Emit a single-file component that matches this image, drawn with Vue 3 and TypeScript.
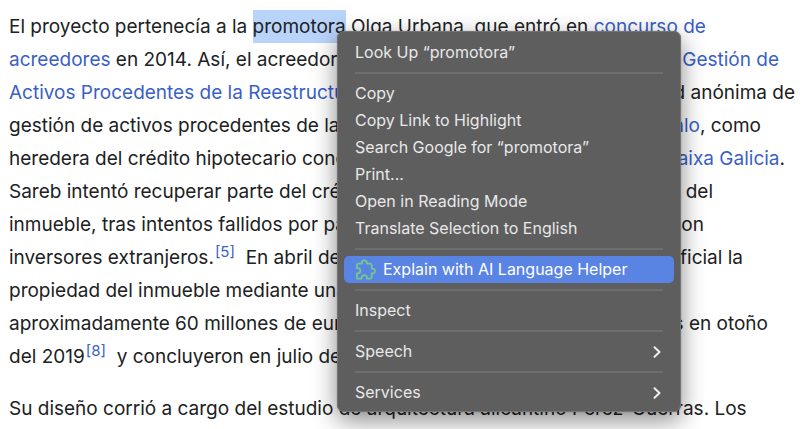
<script setup lang="ts">
interface Segment {
  text: string
  kind?: 'link' | 'mark' | 'note'
}

interface Line {
  start: Segment[]
  end?: Segment[]
  width?: number
}

interface MenuItem {
  label: string
  icon?: boolean
  submenu?: boolean
}

const paragraphs: Line[][] = [
  [
    {
      start: [
        { text: 'El proyecto pertenecía a la ' },
        { text: 'promotora', kind: 'mark' },
        { text: ' Olga Urbana, que entró en ' },
        { text: 'concurso de', kind: 'link' },
      ],
    },
    {
      start: [{ text: 'acreedores', kind: 'link' }, { text: ' en 2014. Así, el acreedor' }],
      end: [{ text: 'Gestión de', kind: 'link' }],
      width: 770,
    },
    {
      start: [{ text: 'Activos Procedentes de la Reestructu', kind: 'link' }],
      end: [{ text: 'sociedad anónima de' }],
      width: 786,
    },
    {
      start: [{ text: 'gestión de activos procedentes de la' }],
      end: [{ text: 'Gonzalo', kind: 'link' }, { text: ', como' }],
      width: 752,
    },
    {
      start: [{ text: 'heredera del crédito hipotecario conc' }],
      end: [{ text: 'Caixa Galicia', kind: 'link' }, { text: '.' }],
      width: 776,
    },
    {
      start: [{ text: 'Sareb intentó recuperar parte del cré' }],
      end: [{ text: 'del' }],
      width: 704,
    },
    {
      start: [{ text: 'inmueble, tras intentos fallidos por pa' }],
      end: [{ text: 'con' }],
      width: 695,
    },
    {
      start: [
        { text: 'inversores extranjeros.' },
        { text: '[5]', kind: 'note' },
        { text: '  En abril de' },
      ],
      end: [{ text: 'oficial la' }],
      width: 734,
    },
    { start: [{ text: 'propiedad del inmueble mediante una' }] },
    {
      start: [{ text: 'aproximadamente 60 millones de eur' }],
      end: [{ text: 'obras en otoño' }],
      width: 759,
    },
    {
      start: [
        { text: 'del 2019' },
        { text: '[8]', kind: 'note' },
        { text: '  y concluyeron en julio de' },
      ],
    },
  ],
  [
    {
      start: [
        {
          text: 'Su diseño corrió a cargo del estudio de arquitectura alicantino Pérez-Guerras. Los',
        },
      ],
    },
  ],
]

const groups: MenuItem[][] = [
  [{ label: 'Look Up “promotora”' }],
  [
    { label: 'Copy' },
    { label: 'Copy Link to Highlight' },
    { label: 'Search Google for “promotora”' },
    { label: 'Print...' },
    { label: 'Open in Reading Mode' },
    { label: 'Translate Selection to English' },
  ],
  [{ label: 'Explain with AI Language Helper', icon: true }],
  [{ label: 'Inspect' }],
  [{ label: 'Speech', submenu: true }],
  [{ label: 'Services', submenu: true }],
]
</script>

<template>
  <main class="page">
    <article class="article">
      <p v-for="(lines, p) in paragraphs" :key="p" class="paragraph">
        <span
          v-for="(line, l) in lines"
          :key="l"
          class="line"
          :style="line.width ? { width: line.width + 'px' } : undefined"
        >
          <span v-for="(part, i) in [line.start, line.end ?? []]" :key="i" class="part">
            <template v-for="(seg, s) in part" :key="s">
              <a v-if="seg.kind === 'link'" href="#" class="link">{{ seg.text }}</a>
              <mark v-else-if="seg.kind === 'mark'" class="selected">{{ seg.text }}</mark>
              <sup v-else-if="seg.kind === 'note'" class="note"><a href="#" class="link">{{ seg.text }}</a></sup>
              <span v-else>{{ seg.text }}</span>
            </template>
          </span>
        </span>
      </p>
    </article>

    <div class="menu" role="menu">
      <div v-for="(group, g) in groups" :key="g" class="group" role="group">
        <button
          v-for="item in group"
          :key="item.label"
          type="button"
          role="menuitem"
          class="item"
          :class="{ active: item.icon }"
        >
          <svg v-if="item.icon" class="puzzle" viewBox="0 0 24 24" aria-hidden="true">
            <path
              d="M20 11h-1V7.200c0-1.200-.8-2-2-2h-3.600V4.200C13.400 2.800 12.200 1.600 10.700 1.600S8 2.800 8 4.200v1H4.200c-1.200 0-2 .8-2 2v3.200h.9c1.700 0 3 1.400 3 3s-1.300 3-3 3h-.9V22.400h5.400v-.9c0-1.700 1.400-3 3-3s3 1.300 3 3v.9H17c1.200 0 2-.8 2-2v-4h1c1.500 0 2.700-1.200 2.700-2.700S21.500 11 20 11z"
            />
          </svg>
          <span class="label">{{ item.label }}</span>
          <svg v-if="item.submenu" class="chevron" viewBox="0 0 8 12" aria-hidden="true">
            <path d="M1.500 1.200 6.500 6l-5 4.800" />
          </svg>
        </button>
      </div>
    </div>
  </main>
</template>

<style>
body {
  margin: 0;
  background: #fff;
}
</style>

<style scoped>
.page {
  position: relative;
  box-sizing: border-box;
  height: 100vh;
  overflow: hidden;
  padding: 10px 9px 0;
  font-family: Inter, "Liberation Sans", sans-serif;
}

.paragraph {
  margin: 0 0 19px;
  color: #202122;
  font-size: 19px;
  line-height: 33px;
}

.line {
  display: flex;
  justify-content: space-between;
  height: 33px;
}

.part {
  display: flex;
  white-space: pre;
}

.link {
  color: #3a5fc6;
  text-decoration: none;
}

.selected {
  background: #b9d4fb;
  color: inherit;
}

.note {
  padding-left: 1px;
  font-size: 15px;
  line-height: 22px;
}

.menu {
  position: absolute;
  top: 31px;
  left: 337px;
  box-sizing: border-box;
  width: 344px;
  padding: 7px 6px 5px;
  border: 1px solid #757575;
  border-radius: 7px;
  background: #5e5e5f;
  box-shadow: 0 0 1px #0008, 0 8px 24px #0007;
}

.group + .group::before {
  content: "";
  display: block;
  height: 2px;
  margin: 6px 11px;
  background: #6e6e6f;
}

.item {
  display: flex;
  align-items: center;
  width: 100%;
  height: 27px;
  padding: 0 11px;
  border: 0;
  border-radius: 5px;
  background: transparent;
  color: #e8e8e8;
  font: 16px/27px Inter, "Liberation Sans", sans-serif;
  text-align: left;
  white-space: nowrap;
}

.label {
  flex: 1;
}

.active {
  background: #5a84e4;
  color: #fff;
}

.puzzle {
  width: 21px;
  height: 21px;
  margin-right: 7px;
  fill: none;
  stroke: #75c987;
  stroke-width: 2;
  stroke-linejoin: round;
}

.chevron {
  width: 8px;
  height: 12px;
  margin-right: 2px;
  fill: none;
  stroke: #ededed;
  stroke-width: 2;
  stroke-linecap: round;
  stroke-linejoin: round;
}
</style>
